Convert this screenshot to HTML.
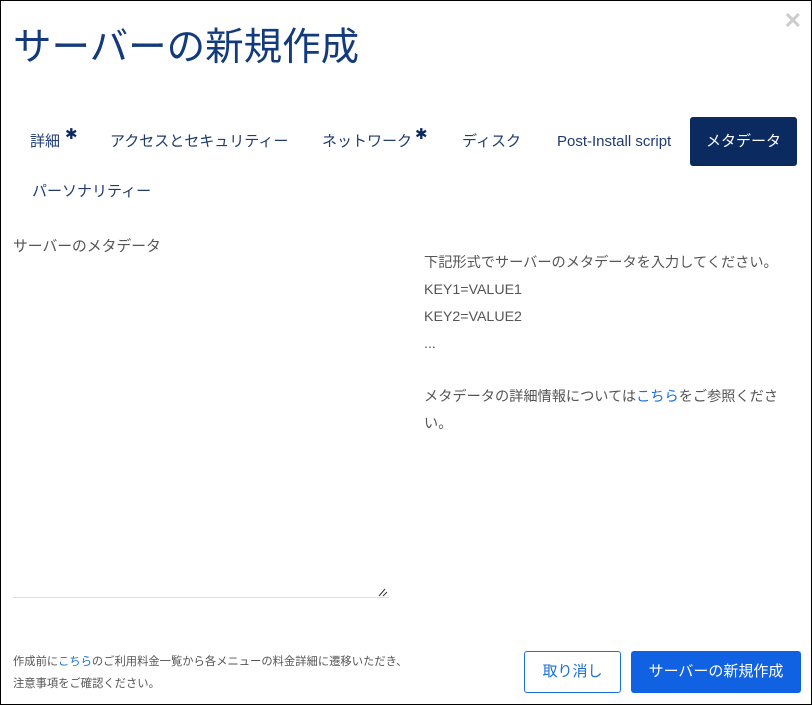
<!DOCTYPE html>
<html><head><meta charset="utf-8"><style>
*{margin:0;padding:0;box-sizing:border-box}
body{width:812px;height:705px;overflow:hidden;background:#fff;font-family:"Liberation Sans","Noto Sans CJK JP",sans-serif;position:relative}
.frame{position:absolute;left:0;top:0;width:812px;height:705px;border:1px solid #000}
.a{position:absolute;white-space:nowrap}
h1{position:absolute;left:13px;top:23px;font-size:38.5px;line-height:50px;font-weight:400;color:#123a7c}
.tab{position:absolute;font-size:15px;line-height:20px;color:#1f3b70;top:132px;white-space:nowrap}
.star{position:absolute;font-size:15px;color:#0b2a60;top:-7px}
.active{position:absolute;left:690px;top:117px;width:107px;height:49px;background:#0b2a60;border-radius:3px;color:#fff;font-size:15px;text-align:center;line-height:49px}
.t{font-size:14.2px;line-height:20px;color:#555}
.close{position:absolute;right:10px;top:8px;font-size:22px;color:#ccc;font-weight:bold}
</style></head><body>
<div class="frame"></div>
<div class="close">✕</div>
<h1>サーバーの新規作成</h1>
<div class="tab" style="left:30px">詳細<span class="star" style="left:35px">✱</span></div>
<div class="tab" style="left:110px">アクセスとセキュリティー</div>
<div class="tab" style="left:322px">ネットワーク<span class="star" style="left:93px">✱</span></div>
<div class="tab" style="left:462px">ディスク</div>
<div class="tab" style="left:557px">Post-Install script</div>
<div class="active">メタデータ</div>
<div class="tab" style="left:32px;top:182px">パーソナリティー</div>
<div class="a" style="left:13px;top:237px;font-size:14.8px;line-height:20px;color:#555">サーバーのメタデータ</div>
<div style="position:absolute;left:13px;top:597px;width:376px;height:1px;background:#ddd"></div>
<svg class="a" style="left:377px;top:587px" width="12" height="10"><path d="M2 9L8 2M6 9L10 5" stroke="#444" stroke-width="1.2"/></svg>
<div class="a t" style="left:424px;top:253px">下記形式でサーバーのメタデータを入力してください。</div>
<div class="a t" style="left:424px;top:280px">KEY1=VALUE1</div>
<div class="a t" style="left:424px;top:307px">KEY2=VALUE2</div>
<div class="a t" style="left:424px;top:334px">...</div>
<div class="a t" style="left:424px;top:387px">メタデータの詳細情報については<span style="color:#1a6fd8">こちら</span>をご参照くださ</div>
<div class="a t" style="left:424px;top:414px">い。</div>
<div class="a" style="left:13px;top:654px;font-size:11.3px;line-height:16px;color:#555">作成前に<span style="color:#1a6fd8">こちら</span>のご利用料金一覧から各メニューの料金詳細に遷移いただき、</div>
<div class="a" style="left:13px;top:676px;font-size:11.3px;line-height:16px;color:#555">注意事項をご確認ください。</div>
<div class="a" style="left:524px;top:651px;width:97px;height:42px;border:1px solid #1a6fd8;border-radius:3px;color:#1a6fd8;font-size:15px;text-align:center;line-height:40px">取り消し</div>
<div class="a" style="left:631px;top:651px;width:170px;height:42px;background:#1162e3;border-radius:3px;color:#fff;font-size:15px;text-align:center;line-height:42px">サーバーの新規作成</div>
</body></html>
